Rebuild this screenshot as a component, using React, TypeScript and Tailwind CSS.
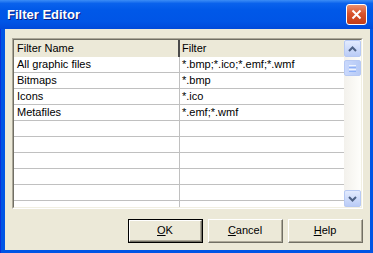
import React from "react";

const rows = [
  ["All graphic files", "*.bmp;*.ico;*.emf;*.wmf"],
  ["Bitmaps", "*.bmp"],
  ["Icons", "*.ico"],
  ["Metafiles", "*.emf;*.wmf"],
  ["", ""],
  ["", ""],
  ["", ""],
  ["", ""],
  ["", ""],
  ["", ""],
];

function Arrow({ up }: { up?: boolean }) {
  return (
    <svg width="9" height="6" viewBox="0 0 9 6">
      <path
        d={up ? "M1 5 L4.5 1.5 L8 5" : "M1 1 L4.5 4.5 L8 1"}
        fill="none"
        stroke="#4D6185"
        strokeWidth="2"
      />
    </svg>
  );
}

function ScrollButton({ children }: { children?: React.ReactNode }) {
  return (
    <div className="w-[17px] h-[17px] flex items-center justify-center rounded-[2px] border border-[#B7C9F3] bg-gradient-to-b from-[#E3EBFE] to-[#BACCF7]">
      {children}
    </div>
  );
}

function Button({ label, u, primary }: { label: string; u: string; primary?: boolean }) {
  const rest = label.slice(1);
  const inner = (
    <div className="flex-1 flex items-center justify-center border-t border-l border-t-white border-l-white border-b border-r border-b-[#716F64] border-r-[#716F64]">
      <div className="flex-1 self-stretch flex items-center justify-center border-b border-r border-b-[#ACA899] border-r-[#ACA899]">
        <span className="text-[11px] text-black">
          <span className="underline">{u}</span>
          {rest}
        </span>
      </div>
    </div>
  );
  return (
    <div
      className={
        "w-[75px] h-[24px] flex bg-[#ECE9D8] " + (primary ? "border border-black" : "")
      }
    >
      {inner}
    </div>
  );
}

export default function App() {
  return (
    <div
      className="w-[373px] h-[253px] flex flex-col bg-[#0055E5] overflow-hidden"
      style={{ fontFamily: "'Liberation Sans', Arial, sans-serif" }}
    >
      <div className="h-[29px] flex items-center justify-between pl-[7px] pr-[6px] bg-[linear-gradient(to_bottom,#3C8DF6_0%,#0A62EC_12%,#0058E8_35%,#0055E6_75%,#0049DA_100%)]">
        <span className="text-white font-bold text-[13px] [text-shadow:1px_1px_0_#0A1C7E]">
          Filter Editor
        </span>
        <div className="w-[21px] h-[21px] rounded-[3px] border border-white flex items-center justify-center bg-[linear-gradient(to_bottom,#E9906F,#D9532C_45%,#C23C18)]">
          <svg width="11" height="11" viewBox="0 0 11 11">
            <path d="M1.5 1.5 L9.5 9.5 M9.5 1.5 L1.5 9.5" stroke="white" strokeWidth="2" />
          </svg>
        </div>
      </div>
      <div className="flex-1 flex px-[4px] pb-[3px] border-l border-[#0831D9]">
        <div className="flex-1 flex flex-col bg-[#ECE9D8] pt-[9px] pl-[7px] pr-[7px]">
          <div className="w-[351px] h-[171px] flex border-t border-l border-t-[#ACA899] border-l-[#ACA899] border-b border-r border-b-white border-r-white">
            <div className="flex-1 flex border-t border-l border-t-[#716F64] border-l-[#716F64] border-b border-r border-b-[#F1EFE2] border-r-[#F1EFE2] bg-white">
              <div className="flex-1 flex flex-col overflow-hidden text-[11px] text-black">
                <div className="h-[17px] shrink-0 flex bg-[#ECE9D8]">
                  <div className="w-[166px] pl-[3px] leading-[16px] border-r-2 border-[#4A4A4A]">
                    Filter Name
                  </div>
                  <div className="flex-1 pl-[2px] leading-[16px]">Filter</div>
                </div>
                {rows.map((r, i) => (
                  <div key={i} className="h-[16px] shrink-0 flex border-b border-[#C0C0C0]">
                    <div className="w-[166px] pl-[3px] leading-[15px] border-r border-[#C0C0C0]">
                      {r[0]}
                    </div>
                    <div className="flex-1 pl-[2px] leading-[15px]">{r[1]}</div>
                  </div>
                ))}
              </div>
              <div className="w-[17px] flex flex-col justify-between bg-[linear-gradient(to_right,#F3F1EC,#FEFEFB)]">
                <div className="flex flex-col gap-[1px]">
                  <ScrollButton>
                    <Arrow up />
                  </ScrollButton>
                  <div className="h-[1px]" />
                  <div className="w-[17px] h-[16px] flex flex-col items-center justify-center gap-[1px] rounded-[2px] border border-[#B7C9F3] bg-gradient-to-r from-[#C9D8FC] to-[#B6CAF6]">
                    <div className="w-[7px] h-[1px] bg-[#EEF4FE]" />
                    <div className="w-[7px] h-[1px] bg-[#8CB0F8]" />
                    <div className="w-[7px] h-[1px] bg-[#EEF4FE]" />
                    <div className="w-[7px] h-[1px] bg-[#8CB0F8]" />
                  </div>
                </div>
                <ScrollButton>
                  <Arrow />
                </ScrollButton>
              </div>
            </div>
          </div>
          <div className="mt-[10px] flex justify-end gap-[5px]">
            <Button label="OK" u="O" primary />
            <Button label="Cancel" u="C" />
            <Button label="Help" u="H" />
          </div>
        </div>
      </div>
    </div>
  );
}
